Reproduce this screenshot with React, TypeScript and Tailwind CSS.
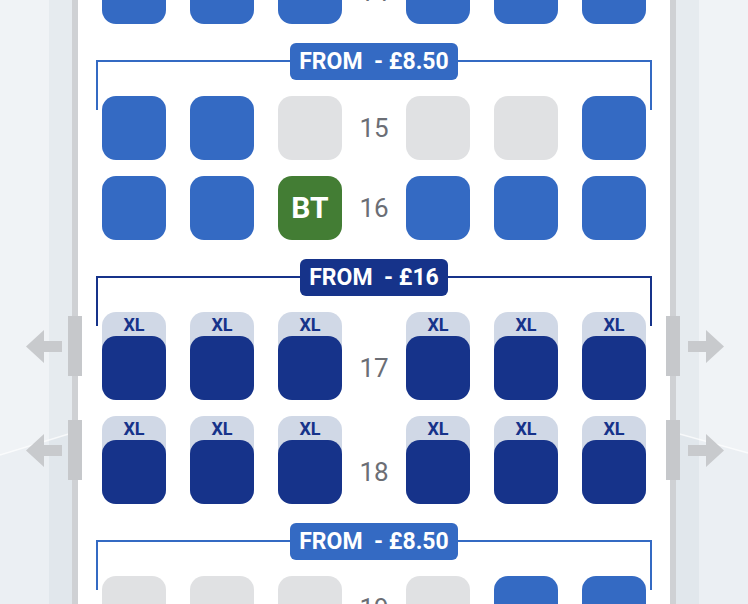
import React from "react";

type Kind = "blue" | "gray" | "green";

const kindCls: Record<Kind, string> = {
  blue: "bg-[#346ac3]",
  gray: "bg-[#e0e1e3]",
  green: "bg-[#437d34]",
};

function Seat({ kind, label }: { kind: Kind; label?: string }) {
  return (
    <div
      className={`w-16 h-16 shrink-0 rounded-[14px] ${kindCls[kind]} flex items-center justify-center text-white font-bold text-[30px] leading-none`}
    >
      {label}
    </div>
  );
}

function XLSeat() {
  return (
    <div className="w-16 h-[88px] shrink-0 rounded-[14px] bg-[#d0d8e6] flex flex-col">
      <div className="h-6 shrink-0 flex items-center justify-center text-[#16338a] font-bold text-[18px] leading-none pt-[1px]">
        XL
      </div>
      <div className="w-16 h-16 shrink-0 rounded-[14px] bg-[#16338a]" />
    </div>
  );
}

function Num({ n, xl }: { n: string; xl?: boolean }) {
  return (
    <div
      className={`w-4 shrink-0 flex items-center justify-center whitespace-nowrap text-[26px] text-[#6b6e75] leading-none ${xl ? "pt-6" : ""}`}
    >
      {n}
    </div>
  );
}

function Row({ n, seats }: { n: string; seats: { kind: Kind; label?: string }[] }) {
  return (
    <div className="flex gap-6 pl-6">
      {seats.slice(0, 3).map((s, i) => (
        <Seat key={i} kind={s.kind} label={s.label} />
      ))}
      <Num n={n} />
      {seats.slice(3).map((s, i) => (
        <Seat key={i} kind={s.kind} label={s.label} />
      ))}
    </div>
  );
}

function XLRow({ n }: { n: string }) {
  return (
    <div className="flex gap-6 pl-6">
      <XLSeat />
      <XLSeat />
      <XLSeat />
      <Num n={n} xl />
      <XLSeat />
      <XLSeat />
      <XLSeat />
    </div>
  );
}

function Header({ text, navy }: { text: string; navy?: boolean }) {
  const border = navy ? "border-[#16338a]" : "border-[#346ac3]";
  const bg = navy ? "bg-[#16338a]" : "bg-[#346ac3]";
  return (
    <div className="relative h-[72px] z-10">
      <div
        className={`absolute left-[18px] right-[18px] top-[36px] h-[50px] border-t-2 border-l-2 border-r-2 ${border}`}
      />
      <div className="absolute left-0 right-0 top-[19px] flex justify-center">
        <div
          className={`${bg} h-[37px] rounded-[6px] px-[9px] flex items-center text-white font-bold text-[23px] leading-none whitespace-pre`}
        >
          {text}
        </div>
      </div>
    </div>
  );
}

function ExitLeft({ top }: { top: number }) {
  return (
    <div className="absolute left-0 w-[82px] h-[60px]" style={{ top }}>
      <div className="absolute left-[68px] top-0 w-[14px] h-[60px] bg-[#c6c8cb]" />
      <svg className="absolute left-[26px] top-[14px]" width="36" height="33" viewBox="0 0 36 33">
        <polygon points="0,16.5 18,0 18,11 36,11 36,22 18,22 18,33" fill="#c8cacd" />
      </svg>
    </div>
  );
}

function ExitRight({ top }: { top: number }) {
  return (
    <div className="absolute left-[666px] w-[82px] h-[60px]" style={{ top }}>
      <div className="absolute left-0 top-0 w-[14px] h-[60px] bg-[#c6c8cb]" />
      <svg className="absolute left-[22px] top-[14px]" width="36" height="33" viewBox="0 0 36 33">
        <polygon points="36,16.5 18,0 18,11 0,11 0,22 18,22 18,33" fill="#c8cacd" />
      </svg>
    </div>
  );
}

export default function App() {
  const B: { kind: Kind; label?: string } = { kind: "blue" };
  const G: { kind: Kind; label?: string } = { kind: "gray" };
  return (
    <div
      className="relative w-[748px] h-[604px] overflow-hidden bg-[#f0f3f6] flex"
      style={{ fontFamily: "Roboto, 'Liberation Sans', sans-serif" }}
    >
      <svg className="absolute left-0 top-0 pointer-events-none" width="748" height="604">
        <polygon points="0,455 72,433 72,604 0,604" fill="rgba(60,80,110,0.025)" />
        <line x1="0" y1="455" x2="72" y2="433" stroke="rgba(255,255,255,0.7)" strokeWidth="1.5" />
        <polygon points="676,433 748,453 748,604 676,604" fill="rgba(60,80,110,0.025)" />
        <line x1="676" y1="433" x2="748" y2="453" stroke="rgba(255,255,255,0.7)" strokeWidth="1.5" />
      </svg>
      <div className="w-[49px] shrink-0" />
      <div className="w-[23px] shrink-0 bg-[rgba(200,210,220,0.25)]" />
      <div className="w-[6px] shrink-0 bg-[#cfd1d4]" />
      <div className="w-[592px] shrink-0 bg-white relative">
        <div className="-mt-10">
          <Row n="14" seats={[B, B, B, B, B, B]} />
        </div>
        <Header text="FROM  - £8.50" />
        <div className="flex flex-col gap-4">
          <Row n="15" seats={[B, B, G, G, G, B]} />
          <Row n="16" seats={[B, B, { kind: "green", label: "BT" }, B, B, B]} />
        </div>
        <Header text="FROM  - £16" navy />
        <div className="flex flex-col gap-4">
          <XLRow n="17" />
          <XLRow n="18" />
        </div>
        <Header text="FROM  - £8.50" />
        <Row n="19" seats={[G, G, G, G, B, B]} />
      </div>
      <div className="w-[6px] shrink-0 bg-[#cfd1d4]" />
      <div className="w-[23px] shrink-0 bg-[rgba(200,210,220,0.25)]" />
      <div className="w-[49px] shrink-0" />
      <ExitLeft top={316} />
      <ExitLeft top={420} />
      <ExitRight top={316} />
      <ExitRight top={420} />
    </div>
  );
}
